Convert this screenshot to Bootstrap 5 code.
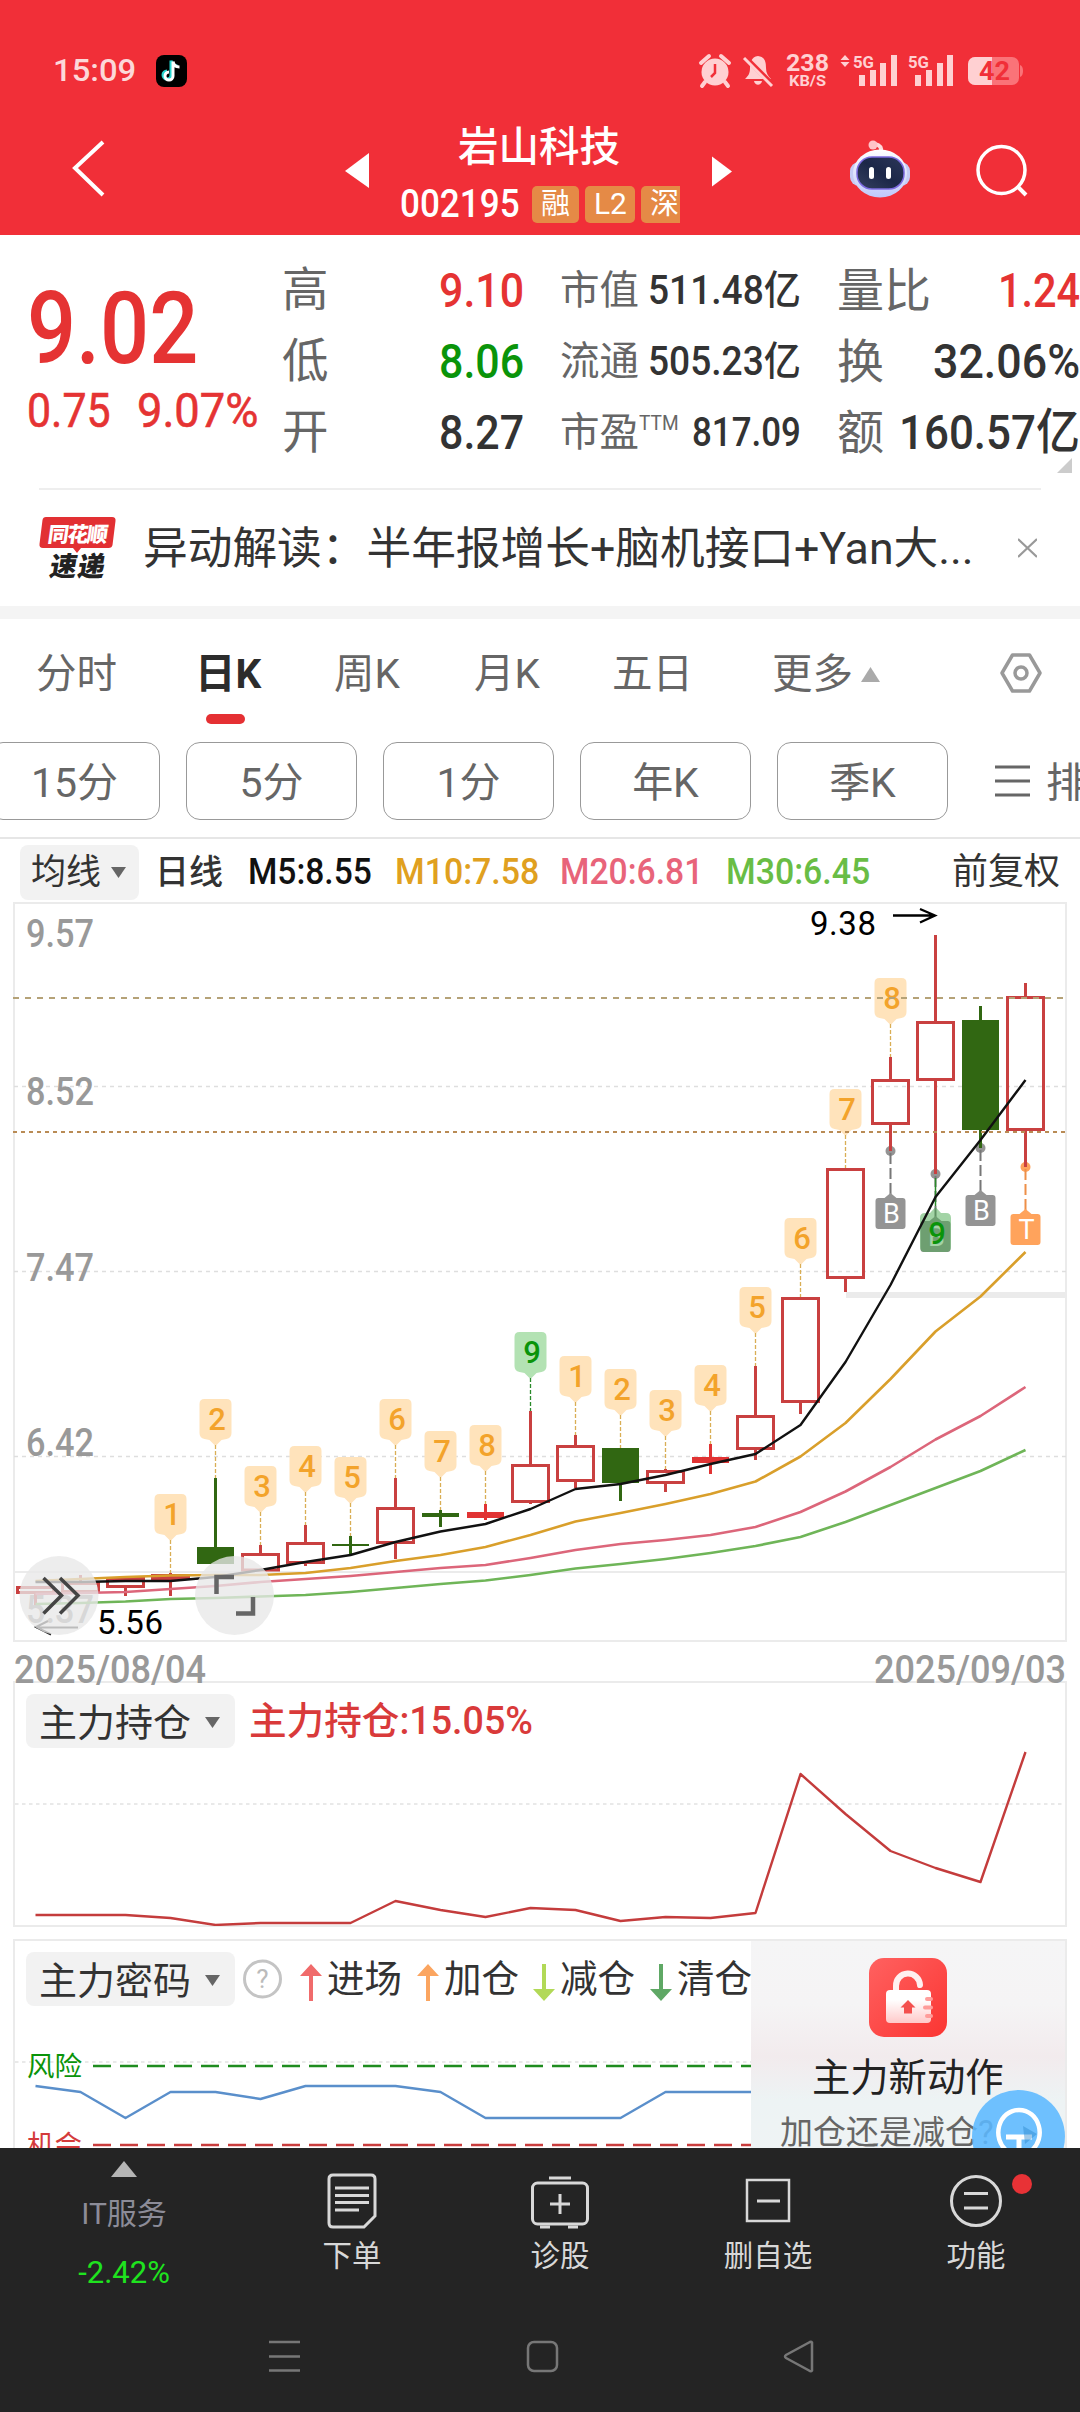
<!DOCTYPE html>
<html lang="zh-CN">
<head>
<meta charset="utf-8">
<meta name="viewport" content="width=device-width, initial-scale=1">
<title>岩山科技 002195</title>
<link rel="stylesheet" href="https://cdn.jsdelivr.net/npm/bootstrap@5.3.0/dist/css/bootstrap.min.css">
<style>
body{width:1080px;height:2412px;overflow:hidden;background:#fff;color:#333;font-family:Roboto,"Noto Sans CJK SC",sans-serif;line-height:1}
svg{display:block;flex:none}
.fit{display:inline-block;white-space:nowrap;transform-origin:0 50%;flex:none}
.red{color:#e53333}.grn{color:#0a940a}.lbl{color:#666}
.top-red{background:#f12f38;height:235px}
.status{height:92px;padding:50px 56px 0 53px;color:rgba(255,255,255,.82)}
.clock{font-size:32px;font-weight:500;width:103px;padding-top:4px}
.title-row{height:143px;padding-left:70px}
.tri-l{margin-left:240px}
.title-mid{width:343px;padding-left:31px;height:143px}
.stock-name{font-size:40.5px;padding:33px 0 0 58px;font-weight:500;line-height:44px}
.code-row{padding-top:16px;height:54px;width:280px;overflow:hidden}
.code-num{font-size:38px;font-weight:500;width:132px;flex:none}
.mkt{background:#e58a46;border-radius:5px;height:37px;font-size:29px;line-height:36px;text-align:center;flex:none;margin-right:6px;color:#fff}
.quote{height:253px}
.price-col{width:282px;padding:44px 0 0 27px}
.price{font-size:101px;font-weight:500;line-height:100px;height:100px}
.chg{font-size:49px;font-weight:400;-webkit-text-stroke:.6px;padding-top:7px}
.q-row{height:71px;display:flex;align-items:center;justify-content:space-between}
.c1{width:242px;padding-top:20px;font-size:46.5px}
.c2{width:241px;margin-left:36px;padding-top:20px;font-size:39.500px}
.c3{width:243px;margin-left:36px;padding-top:20px;font-size:47px}
.c1 .v,.c3 .v{font-size:49px;font-weight:500}
.c2 .v{font-size:40px;font-weight:500}
.news{height:118px;border-top:2px solid #eee;margin:0 39px}
.news-t{font-size:44.8px;width:830px;white-space:nowrap;padding:3px 0 0 27px}
.gap-band{height:13px;background:#f4f4f4}
.tabs{height:108px;font-size:40.5px;color:#666;padding:3px 0 0 36px}
.tabs>div{flex:none}
.tabs .on{color:#2c2c2c;font-weight:700;position:relative}
.tabs .on::after{content:"";position:absolute;left:11px;top:60px;width:39px;height:10px;border-radius:5px;background:#e53033}
.chips{height:110px;padding-top:15px;margin-left:-11px;overflow:hidden}
.pchip{width:171px;height:78px;border:1.5px solid #999;border-radius:14px;margin-right:26px;padding-top:4px;flex:none;color:#666;font-size:41px;display:flex;align-items:center;justify-content:center}
.ma{height:65px;border-top:2px solid #e6e6e6;padding:3px 20px 0 20px;font-size:36px;font-weight:500}
.sel{background:#f2f2f2;border-radius:8px;display:flex;align-items:center;justify-content:space-between;color:#333;font-weight:400;flex:none}
.ma .sel{width:119px;height:55px;padding:0 13px 0 11px;font-size:35px}
.ma .fit{position:relative}
.dates{height:36px;padding:6px 14px 0 14px;font-size:38.5px;color:#999;font-weight:500}
.dates .fit{line-height:38px}
.pane{margin:0 13px 0 13px;border:2px solid #ebebeb;width:1054px}
.p1{height:246px}
.p2{height:209px;margin-top:12px;border-bottom:0;position:relative;overflow:hidden}
.head{height:66px;padding:11px 0 0 11px;font-size:38px}
.head .sel{width:209px;height:54px;padding:3px 15px 0 13px}
.leg{font-size:37.5px;flex:none}
.promo{position:absolute;left:736px;top:0;width:316px;height:210px;background:linear-gradient(180deg,#f5f5f6 0%,#f5f4f5 30%,#f2ebed 55%,#edf3f4 76%,#eff3f4 100%);overflow:hidden}
.promo-a{font-size:38.3px;color:#222;padding:22px 0 0 61px;white-space:nowrap}
.promo-b{font-size:33px;color:#666;padding:19px 0 0 29px;white-space:nowrap}
.promo svg.bulb{position:absolute;left:221px;top:149px}
.foot{height:264px;background:#242424;color:#d8d8d8}
.foot .items{height:166px}
.fi{width:208px;font-size:29.5px;height:166px}
.fi svg{margin:21px 0 0}
.fi .cap{padding-top:13px}
.idx{width:248px}
.sysnav{height:98px;padding-top:25px}
svg text{font-family:Roboto,"Noto Sans CJK SC",sans-serif}
</style>
<script src="https://cdn.jsdelivr.net/npm/bootstrap@5.3.0/dist/js/bootstrap.bundle.min.js"></script>
</head>
<body>
<header class="top-red">
  <div class="status d-flex">
    <div class="clock"><span class="fit" data-w="83">15:09</span></div>
    <svg width="31" height="42" viewBox="0 0 31 42"><rect y="5" width="31" height="32" rx="8" fill="#000"/><path d="M16 11v14.500a4 4 0 1 1-4-4M16 11c.5 3.500 3 5.500 6.500 5.500" transform="translate(-1 -.5)" fill="none" stroke="#25d6d0" stroke-width="3"/><path d="M17 11.500v14.500a4 4 0 1 1-4-4M17 11.500c.5 3.500 3 5.500 6.500 5.500" fill="none" stroke="#fff" stroke-width="3"/></svg>
    <svg class="ms-auto" width="326" height="42" viewBox="699 50 326 42" fill="#ffd0d2">
      <circle cx="716" cy="72" r="13.500"/><path d="M702 63l8-7M730 63l-8-7M706 82l-3 4M726 82l3 4" stroke="#ffd0d2" stroke-width="4" stroke-linecap="round"/><path d="M716 64v9l-4 4" stroke="#f12f38" stroke-width="2.500" fill="none"/>
      <path d="M759 56c-7 1-8 7-8 12 0 6-2 8-5 11h26c-3-3-5-6-5-11 0-6-1-11-8-12zM755 81h8c-1 5-7 5-8 0z"/><path d="M746 57l28 28" stroke="#f12f38" stroke-width="5"/><path d="M745 58l28 28" stroke="#ffd0d2" stroke-width="3"/>
      <text x="787" y="71" font-size="23" font-weight="700" textLength="43" lengthAdjust="spacingAndGlyphs">238</text>
      <text x="790" y="86" font-size="15" font-weight="700" textLength="37" lengthAdjust="spacingAndGlyphs">KB/S</text>
      <path d="M846 55l4.500 5h-9zM846 67l4.500-5h-9z"/>
      <text x="854" y="68" font-size="17" font-weight="700" textLength="21" lengthAdjust="spacingAndGlyphs">5G</text>
      <path d="M860 75h6v11h-6zM871 70h6v16h-6zM881 63h6v23h-6zM892 55h6v31h-6z"/>
      <text x="909" y="68" font-size="17" font-weight="700" textLength="21" lengthAdjust="spacingAndGlyphs">5G</text>
      <path d="M916 75h6v11h-6zM927 70h6v16h-6zM938 63h6v23h-6zM948 55h6v31h-6z"/>
      <rect x="969" y="57" width="51" height="28" rx="7" fill="#fa7378"/><path d="M1021 65q3 1 3 6t-3 6z" fill="#fa7378"/><path d="M976 57h17v28h-17a7 7 0 0 1-7-7v-14a7 7 0 0 1 7-7z"/>
      <text x="980" y="80" font-size="25" font-weight="700" fill="#f12f38" textLength="31" lengthAdjust="spacingAndGlyphs">42</text>
    </svg>
  </div>
  <div class="title-row d-flex text-white">
    <svg width="35" height="143" viewBox="70 92 35 143"><path d="M103 142L75 168l28 27" fill="none" stroke="#fff" stroke-width="4"/></svg>
    <svg class="tri-l" width="24" height="143" viewBox="345 92 24 143"><path d="M345 171l24-18v35z" fill="#fff"/></svg>
    <div class="title-mid">
      <div class="stock-name">岩山科技</div>
      <div class="code-row d-flex align-items-center">
        <div class="code-num"><span class="fit" data-w="120">002195</span></div>
        <div class="mkt" style="width:47px">融</div><div class="mkt" style="width:50px"><span class="fit" data-w="33">L2</span></div><div class="mkt" style="width:47px">深</div>
      </div>
    </div>
    <svg width="20" height="143" viewBox="712 92 20 143"><path d="M732 171.500l-20-15v30z" fill="#fff"/></svg>
    <svg width="180" height="143" viewBox="848 92 180 143" style="margin-left:116px">
      <defs><linearGradient id="rb" x1="0" y1="0" x2="0" y2="1"><stop offset="0" stop-color="#fff"/><stop offset="1" stop-color="#bfc8fa"/></linearGradient><linearGradient id="fc" x1="0" y1="1" x2="1" y2="0"><stop offset="0" stop-color="#35405f"/><stop offset=".5" stop-color="#1b2748"/><stop offset="1" stop-color="#2c3658"/></linearGradient></defs>
      <path d="M881 153c1-5-1-8-6-9" fill="none" stroke="#ffd9dc" stroke-width="4"/><circle cx="873" cy="145" r="4.500" fill="#ffc3c8"/>
      <rect x="850" y="162" width="60" height="24" rx="9" fill="#c5ccf5"/><ellipse cx="880" cy="173.500" rx="27" ry="24" fill="url(#rb)"/>
      <rect x="857" y="157" width="47" height="32" rx="15" fill="url(#fc)" stroke="#7c6be0" stroke-width="1.500"/>
      <rect x="869" y="167" width="5" height="12" rx="2.500" fill="#fff"/><rect x="886" y="167" width="5" height="12" rx="2.500" fill="#fff"/>
      <circle cx="1001.500" cy="170" r="23.500" fill="none" stroke="#fff" stroke-width="3.500"/><path d="M1017 186l9 9" stroke="#fff" stroke-width="4"/>
    </svg>
  </div>
</header>

<section class="quote d-flex">
  <div class="price-col red">
    <div class="price"><span class="fit" data-w="171">9.02</span></div>
    <div class="chg d-flex"><span class="fit" data-w="84">0.75</span><span class="fit" data-w="121" style="left:26px;position:relative">9.07%</span></div>
  </div>
  <div class="c1">
    <div class="q-row"><span class="lbl">高</span><span class="v red fit" data-w="85">9.10</span></div>
    <div class="q-row"><span class="lbl">低</span><span class="v grn fit" data-w="85">8.06</span></div>
    <div class="q-row"><span class="lbl">开</span><span class="v fit" data-w="85">8.27</span></div>
  </div>
  <div class="c2">
    <div class="q-row"><span class="lbl">市值</span><span class="v fit" data-w="153">511.48亿</span></div>
    <div class="q-row"><span class="lbl">流通</span><span class="v fit" data-w="153">505.23亿</span></div>
    <div class="q-row"><span class="lbl d-flex">市盈<small class="fit" data-w="40" style="font-size:21px">TTM</small></span><span class="v fit" data-w="109">817.09</span></div>
  </div>
  <div class="c3">
    <div class="q-row"><span class="lbl">量比</span><span class="v red fit" data-w="82">1.24</span></div>
    <div class="q-row"><span class="lbl">换</span><span class="v fit" data-w="147">32.06%</span></div>
    <div class="q-row"><span class="lbl">额</span><span class="v fit" data-w="181">160.57亿</span></div>
    <svg class="ms-auto me-2" width="15" height="15" viewBox="0 0 15 15" style="margin-top:-10px"><path d="M15 0v15H0z" fill="#ccc"/></svg>
  </div>
</section>

<div class="news d-flex align-items-center">
  <svg width="77" height="66" viewBox="39 514 77 66">
    <path d="M46 516h66q4 0 3.500 4l-3 24q-.5 3-4 3H81l-4 5-4-5H43q-4 0-3.500-4l3-24q.5-3 3.500-3z" fill="#e23033"/>
    <g transform="translate(77 541) skewX(-8)"><text text-anchor="middle" font-size="21" font-weight="900" fill="#fff" textLength="60">同花顺</text></g>
    <g transform="translate(76 575) skewX(-10)"><text text-anchor="middle" font-size="27" font-weight="900" fill="#222" textLength="55">速递</text></g>
  </svg>
  <div class="news-t"><span class="fit" data-w="831">异动解读：半年报增长+脑机接口+Yan大...</span></div>
  <svg class="ms-auto me-1" width="19" height="20" viewBox="0 0 19 20"><path d="M0 1l19 18M19 1L0 19" stroke="#999" stroke-width="2.200"/></svg>
</div>
<div class="gap-band"></div>

<nav class="tabs d-flex align-items-center">
  <div style="width:159px">分时</div>
  <div class="on" style="width:139px">日K</div>
  <div style="width:140px">周K</div>
  <div style="width:138px">月K</div>
  <div style="width:160px">五日</div>
  <div class="d-flex align-items-center" style="width:228px">更多<svg class="ms-2" width="19" height="15" viewBox="0 0 19 15"><path d="M9.500 0L19 15H0z" fill="#aaa"/></svg></div>
  <svg width="42" height="40" viewBox="0 0 42 40" style="margin-top:-3px"><path d="M12.500 2h17L40 20 29.500 38h-17L2 20z" fill="none" stroke="#999" stroke-width="3.500" stroke-linejoin="round"/><circle cx="21" cy="20" r="6" fill="none" stroke="#999" stroke-width="3.500"/></svg>
</nav>
<div class="chips d-flex">
  <div class="pchip">15分</div><div class="pchip">5分</div><div class="pchip">1分</div><div class="pchip">年K</div><div class="pchip">季K</div>
  <div class="d-flex align-items-center lbl" style="height:78px;font-size:41px;margin-left:21px;flex:none"><svg width="35" height="34" viewBox="0 0 35 34"><path d="M0 3h35M0 17h35M0 31h35" stroke="#666" stroke-width="3"/></svg><span style="margin-left:16px;padding-top:4px">排</span></div>
</div>
<div class="ma d-flex align-items-center">
  <div class="sel"><span>均线</span><svg width="15" height="11" viewBox="0 0 15 11"><path d="M0 0h15L7.500 11z" fill="#666"/></svg></div>
  <span style="width:91px;padding-left:16px;font-size:34px;flex:none">日线</span>
  <span class="fit" data-w="124" style="color:#111;left:18px">M5:8.55</span>
  <span class="fit" data-w="144" style="color:#e0a020;left:41px">M10:7.58</span>
  <span class="fit" data-w="143" style="color:#e8647a;left:62px">M20:6.81</span>
  <span class="fit" data-w="144" style="color:#69bd45;left:85px">M30:6.45</span>
  <span class="ms-auto fw-normal" style="font-size:36px">前复权</span>
</div>

<svg id="kline" width="1080" height="743" viewBox="0 902 1080 743"></svg>
<div class="dates d-flex justify-content-between"><span class="fit" data-w="192">2025/08/04</span><span class="fit" data-w="192">2025/09/03</span></div>

<section class="pane p1">
  <div class="head d-flex">
    <div class="sel"><span>主力持仓</span><svg width="15" height="11" viewBox="0 0 15 11"><path d="M0 0h15L7.500 11z" fill="#666"/></svg></div>
    <span class="fit" style="font-weight:500;margin-left:14px;padding-top:8px;color:#d93a3a" data-w="284">主力持仓:15.05%</span>
  </div>
  <svg id="hold" width="1050" height="177" viewBox="15 1749 1050 177"></svg>
</section>

<section class="pane p2">
  <svg id="risk" width="1050" height="144" viewBox="15 2006 1050 144" style="position:absolute;top:65px;left:0"></svg>
  <div class="promo">
    <svg width="79" height="79" viewBox="869 1958 79 79" style="margin:17px 0 0 118px">
      <defs><linearGradient id="lk" x1="0" y1="0" x2="1" y2="1"><stop offset="0" stop-color="#ff6160"/><stop offset="1" stop-color="#fb3532"/></linearGradient><linearGradient id="lb" x1="0" y1="0" x2="0" y2="1"><stop offset=".3" stop-color="#fff"/><stop offset="1" stop-color="#ffc9c9"/></linearGradient></defs>
      <rect x="869" y="1958" width="78" height="79" rx="15" fill="url(#lk)"/>
      <path d="M896 1992v-6a12 12 0 0 1 24-1" fill="none" stroke="#fff0f0" stroke-width="6" stroke-linecap="round"/>
      <rect x="886" y="1990" width="45" height="33" rx="4" fill="url(#lb)"/>
      <path d="M908 2000l7.500 7.500h-3.500v6h-8v-6h-3.500z" fill="#f4504e"/>
      <path d="M927 1999h4M925 2007.500h6M927 2016h4" stroke="#ff9c9a" stroke-width="4" stroke-linecap="round"/>
    </svg>
    <div class="promo-a">主力新动作</div>
    <div class="promo-b">加仓还是减仓?</div>
    <svg class="bulb" width="93" height="93" viewBox="0 0 93 93"><circle cx="46.500" cy="46.500" r="46.500" fill="#5cb8ff" fill-opacity=".88"/><path d="M36 62C18 48 27 20 47 20s29 28 11 42" fill="none" stroke="#fff" stroke-width="4.500"/><path d="M34 47h26M47 47v20" stroke="#fff" stroke-width="5"/><path d="M51 36l14 8-12 10z" fill="#2c87cc" fill-opacity=".45"/></svg>
  </div>
  <div class="head d-flex" style="position:relative">
    <div class="sel"><span>主力密码</span><svg width="15" height="11" viewBox="0 0 15 11"><path d="M0 0h15L7.500 11z" fill="#666"/></svg></div>
    <svg width="40" height="54" viewBox="0 0 40 54" style="margin-left:8px"><circle cx="19.500" cy="27" r="18" fill="none" stroke="#c4c4c4" stroke-width="3"/><text x="19.500" y="36" text-anchor="middle" font-size="26" fill="#bbb">?</text></svg>
    <svg width="22" height="54" viewBox="0 0 22 54" style="margin-left:17px"><path d="M11 12l11 12h-9v25H9V24H0z" fill="#f06b6b"/></svg><span class="leg" style="padding:9px 15px 0 5px">进场</span>
    <svg width="22" height="54" viewBox="0 0 22 54"><path d="M11 12l11 12h-9v25H9V24H0z" fill="#fba560"/></svg><span class="leg" style="padding:9px 14px 0 5px">加仓</span>
    <svg width="22" height="54" viewBox="0 0 22 54"><path d="M11 49L0 37h9V12h4v25h9z" fill="#b2d957"/></svg><span class="leg" style="padding:9px 15px 0 5px">减仓</span>
    <svg width="22" height="54" viewBox="0 0 22 54"><path d="M11 49L0 37h9V12h4v25h9z" fill="#5fa865"/></svg><span class="leg" style="padding:9px 0 0 5px">清仓</span>
  </div>
</section>

<footer class="foot">
  <div class="items d-flex">
    <div class="idx d-flex flex-column align-items-center" style="font-size:30px;color:#8c8c98">
      <svg width="26" height="16" viewBox="0 0 26 16" style="margin-top:13px"><path d="M13 0l13 16H0z" fill="#b5b5b5"/></svg>
      <div style="padding-top:22px">IT服务</div>
      <div style="padding-top:28px;color:#1fe31f;font-size:31px"><span class="fit" data-w="92">-2.42%</span></div>
    </div>
    <div class="fi d-flex flex-column align-items-center"><svg width="60" height="60" viewBox="322 2169 60 60" fill="none" stroke="#d8d8d8" stroke-width="3"><path d="M333 2175h38q4 0 4 4v37l-11 11h-31q-4 0-4-4v-44q0-4 4-4z"/><path d="M335 2188h34M335 2195.500h34M335 2202.500h34M335 2210h24"/></svg><div class="cap">下单</div></div>
    <div class="fi d-flex flex-column align-items-center"><svg width="60" height="60" viewBox="530 2169 60 60" fill="none" stroke="#d8d8d8" stroke-width="3"><rect x="532.500" y="2183" width="55" height="41" rx="5"/><path d="M549 2178h22M560 2194v20M550 2204h20M540 2227h10M568 2227h10"/></svg><div class="cap">诊股</div></div>
    <div class="fi d-flex flex-column align-items-center"><svg width="60" height="60" viewBox="738 2169 60 60" fill="none" stroke="#d8d8d8" stroke-width="2.500"><rect x="747" y="2180" width="42" height="41"/><path d="M757 2201h23" stroke-width="3"/></svg><div class="cap">删自选</div></div>
    <div class="fi d-flex flex-column align-items-center"><svg width="60" height="60" viewBox="946 2169 60 60" fill="none" stroke="#d8d8d8" stroke-width="3" overflow="visible"><circle cx="976" cy="2201" r="24.500"/><path d="M964 2193.500h24M964 2208h24"/><circle cx="1022" cy="2184" r="10" fill="#e83236" stroke="none"/></svg><div class="cap">功能</div></div>
  </div>
  <div class="sysnav">
    <svg width="1080" height="36" viewBox="0 2339 1080 36" fill="none" stroke="#777" stroke-width="2.500"><path d="M269 2342h31M269 2356.500h31M269 2370.500h31"/><rect x="528" y="2342" width="29" height="29" rx="6"/><path d="M812 2342.500v28q-1 1.500-3 0l-23-12.500q-2-1.500 0-3l23-12.500q2-1.500 3 0z"/></svg>
  </div>
</footer>

<script>
// Squeeze each numeric label to its column width
document.querySelectorAll('.fit').forEach(e=>{
  const n=e.offsetWidth,w=+e.dataset.w;
  e.style.transform=`scaleX(${w/n})`;e.style.marginRight=(w-n)+'px';
});
const X=i=>35.5+45*i;
const line=(ys,c,w=2.6)=>`<polyline points="${ys.map((y,i)=>X(i)+','+y).join(' ')}" fill="none" stroke="${c}" stroke-width="${w}" stroke-linejoin="round"/>`;
const hl=(x1,x2,y,c,w,d='')=>`<line x1="${x1}" x2="${x2}" y1="${y}" y2="${y}" stroke="${c}" stroke-width="${w}" ${d?`stroke-dasharray="${d}"`:''}/>`;
// [body top, body bottom, high, low, kind] : h hollow red, g green, r solid red
const K=[[1586,1594,1586,1605,'h'],[1582,1593,1575,1593,'h'],[1577,1588,1577,1596,'h'],[1574,1580,1573,1596,'h'],[1547,1564,1478,1564,'g'],[1553,1571.500,1545,1571,'h'],[1542,1564,1525,1566,'h'],[1544,1546,1536,1555,'g'],[1507,1544,1478,1559,'h'],[1513,1517,1510,1527,'g'],[1512,1518,1504,1520,'r'],[1464,1503,1411,1504,'h'],[1445,1482,1435,1488,'h'],[1448,1483,1448,1501,'g'],[1470,1484,1469,1492,'h'],[1457,1463,1444,1474,'r'],[1415,1450,1366,1460,'h'],[1297,1403,1297,1414,'h'],[1168,1279,1168,1292,'h'],[1079,1125,1057,1151,'h'],[1021,1081,935,1174,'h'],[1020,1130,1006,1148,'g'],[996,1131,983,1167,'h']];
let s='<rect x="14" y="903" width="1052" height="738" fill="none" stroke="#ebebeb" stroke-width="2"/>';
s+=[1086.5,1271.5,1456.5].map(y=>hl(14,1066,y,'#dedede',1.3,'4 4')).join('')+hl(14,1066,1572,'#ebebeb',2);
s+='<rect x="846" y="1292" width="220" height="6" fill="#ebebeb"/>';
[['9.57',947],['8.52',1105],['7.47',1281],['6.42',1456],['5.37',1623]].forEach(t=>s+=`<text x="26" y="${t[1]}" font-size="39.500" font-weight="500" fill="#999" textLength="68" lengthAdjust="spacingAndGlyphs">${t[0]}</text>`);
K.forEach(([a,b,h,l,k],i)=>{const x=X(i);
  if(k=='h'){if(h<a)s+=`<path d="M${x} ${h}V${a}" stroke="#c94040" stroke-width="3"/>`;if(l>b)s+=`<path d="M${x} ${b}V${l}" stroke="#c94040" stroke-width="3"/>`;
    s+=`<rect x="${x-18}" y="${a+1.5}" width="36" height="${b-a-3}" fill="none" stroke="#c94040" stroke-width="3"/>`;}
  else{const c=k=='g'?'#316712':'#e13333';s+=`<path d="M${x} ${h}V${l}" stroke="${c}" stroke-width="3"/><rect x="${x-18.5}" y="${a}" width="37" height="${b-a}" fill="${c}"/>`;}
});
const tag=(i,n,g)=>{const x=X(i),h=K[i][2],t=h-79;return `<path d="M${x-11} ${t}h22q5 0 5 5v29q0 5-5 6l-5 1-6 6-6-6-5-1q-5-1-5-6v-29q0-5 5-5z" fill="${g?'#b3e2b3':'#ffe3bb'}"/><path d="M${x} ${t+46}V${h}" stroke="${g?'#2a8a2a':'#d9ae55'}" stroke-width="1.300" stroke-dasharray="4 2"/><text x="${x+1.5}" y="${t+31}" text-anchor="middle" font-size="31" font-weight="500" fill="${g?'#0a940a':'#f3a32b'}">${n}</text>`};
[1,2,3,4,5,6,7,8,9,1,2,3,4,5,6,7,8].forEach((n,j)=>s+=tag(j+3,n,n==9));
const low=(i,t,c,dc,ch)=>{const x=X(i),y=K[i][3];return `<circle cx="${x}" cy="${y}" r="5" fill="${c}"/><path d="M${x} ${y-8}V${y}" stroke="${i==21?'#316712':'#c94040'}" stroke-width="3"/><path d="M${x} ${y+2}V${t-4}" stroke="${dc}" stroke-width="2" stroke-dasharray="11 4"/><path d="M${x-12} ${t}h6l6-5 6 5h6q3 0 3 3v25q0 3-3 3h-24q-3 0-3-3v-25q0-3 3-3z" fill="${c}"/><text x="${x+1}" y="${t+25}" text-anchor="middle" font-size="27" fill="#fff">${ch}</text>`};
s+=low(19,1198,'#949494','#777','B')+low(20,1221,'#949494','#777','B')+low(21,1195,'#949494','#777','B')+low(22,1214,'#ffa35c','#ee8f48','T');
s+='<path d="M925 1213h5l5.500-6 5.500 6h5q5 0 5 5v29q0 5-5 5h-21q-5 0-5-5v-29q0-5 5-5z" fill="#48a94d" fill-opacity=".5"/><path d="M935.500 1178v28" stroke="#2a8a2a" stroke-width="1.500"/><text x="937" y="1244" text-anchor="middle" font-size="31" font-weight="500" fill="#0a940a">9</text>';
s+=hl(13,1066,998,'#b5a277',2,'6 6')+hl(13,1066,1132,'#b98b55',2,'4 4');
s+=line([1604,1603,1601.5,1599,1598,1596.5,1595,1592,1588,1584,1580.5,1575,1568.5,1564,1559,1553,1546,1537,1522,1505,1488,1471,1450],'#6fb558');
s+=line([1594,1593,1592,1589,1586,1582,1579,1576,1572,1568,1565,1558,1550,1544,1540,1535,1527,1512,1491.5,1467,1439.5,1416,1387],'#dc667a');
s+=line([1581,1579,1577,1575.5,1575,1575,1573,1568,1561,1555,1547,1535,1521.5,1513,1504,1494,1481.5,1456.5,1423,1379,1331.5,1296.5,1252],'#d99f2b');
s+=line([1582,1582,1581,1581,1577,1570,1562,1555,1542,1531.5,1524,1509,1489,1484,1475,1464,1454,1425,1362,1285,1197,1140,1080],'#111',2.4);
s+='<g fill="none" stroke="#000" stroke-width="2.300"><path d="M893 915.500h42M920 909l15 6.500-15 7"/></g><text x="810" y="935" font-size="33" fill="#000" textLength="66">9.38</text>';
s+='<path d="M78 1627.500H36M48 1621l-12 6 15 7.500" fill="none" stroke="#222" stroke-width="2"/><text x="97" y="1634" font-size="33" fill="#000" textLength="66">5.56</text>';
s+='<circle cx="59" cy="1595.500" r="39.500" fill="#e8e8e8" fill-opacity=".78"/><circle cx="234.500" cy="1595.500" r="39.500" fill="#e8e8e8" fill-opacity=".78"/>';
s+='<path d="M43.500 1578l18 17.500-18 18M60 1578l18 17.500-18 18" fill="none" stroke="#444" stroke-width="3.500"/><path d="M216.500 1594v-17H234M236 1613.500h17V1597" fill="none" stroke="#666" stroke-width="4.500"/>';
document.getElementById('kline').innerHTML=s;
document.getElementById('hold').innerHTML=hl(15,1066,1804,'#e2e2e2',1.6,'3.5 3.5')+line([1915,1915,1915,1918,1925,1923,1923,1923,1901,1910,1917,1908,1910,1921,1917,1918,1913,1774,1814,1851,1868,1882,1752],'#c43c3c',2.4);
document.getElementById('risk').innerHTML=hl(15,751,2062,'#e2e2e2',1.6,'3.5 3.5')+hl(93,751,2066,'#1f8c1f',2.4,'18 9')+hl(93,751,2145,'#c93d3d',2.4,'18 9')
 +'<text x="27" y="2076" font-size="27.500" fill="#0a940a">风险</text><text x="27" y="2155" font-size="27.500" fill="#d43b3b">机会</text>'
 +line([2086,2092,2118,2092,2092,2099,2086,2086,2086,2092,2118,2118,2118,2118,2092,2092,2092],'#5a8fcb',2.4);
</script>
</body>
</html>
